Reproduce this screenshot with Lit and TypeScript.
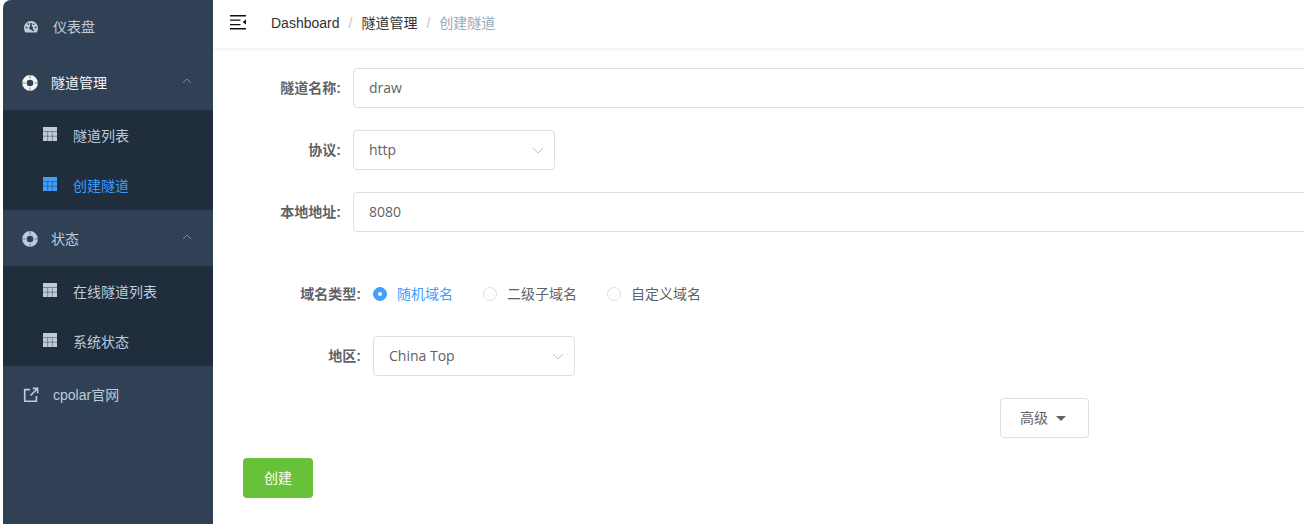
import { LitElement, html, css } from "lit";
import { customElement } from "lit/decorators.js";

const gauge = html`<svg class="ico" viewBox="0 0 16 16"><path fill="currentColor" fill-rule="evenodd" d="M8 2C3.900 2 1 5.300 1 9.200c0 1.500.4 2.800 1 3.900.2.3.5.5.8.5h10.400c.3 0 .6-.2.8-.5.6-1.100 1-2.400 1-3.900C15 5.300 12.100 2 8 2zM4.300 4.700l1.300-.8.8 1.400-1.300.8zM2.500 9l.3-1.500 1.600.4-.3 1.500zM8.800 4v3.200c.7.3 1.200.9 1.200 1.700 0 .4-.1.8-.4 1.100l1.900 2H9.300L8.300 10.800H8a1.900 1.900 0 0 1-.8-3.600V4zM11.700 8l1.600-.4.3 1.400-1.600.4zM10.500 6.200l-.9-.9 1.100-1 .9.9z"/></svg>`;
const buoy = html`<svg class="ico buoy" viewBox="0 0 16 16"><circle cx="8" cy="8" r="5.600" fill="none" stroke="currentColor" stroke-width="4.600"/><path d="M0 8h3.500M12.500 8h3.500M8 0v3.500M8 12.500v3.500" stroke="#304156" stroke-width="1" opacity=".6"/></svg>`;
const table = html`<svg class="ico tbl" viewBox="0 0 14 14"><path fill="currentColor" d="M0 0h14v14H0z"/><path d="M0 4.500h14M0 9.200h14M4.700 4.500V14M9.300 4.500V14" stroke="#1f2d3d" stroke-width=".8" opacity=".55" fill="none"/></svg>`;
const link = html`<svg class="ico" viewBox="0 0 16 16"><path fill="none" stroke="currentColor" stroke-width="1.600" d="M7 2.600H1.700v11.700h11.700V9M7.500 8.500 14 2M9.800 1.400h4.800v4.800"/></svg>`;
const chevUp = html`<svg class="chev" viewBox="0 0 12 12"><path d="M2 8 6 4l4 4" fill="none" stroke="currentColor" stroke-width="1"/></svg>`;
const chevDown = html`<svg class="sel-chev" viewBox="0 0 14 14"><path d="M1.800 4.800 7 10l5.200-5.200" fill="none" stroke="#c0c4cc" stroke-width="1"/></svg>`;

@customElement("app-root")
export class AppRoot extends LitElement {
  static styles = css`
    :host { display: block; width: 100%; height: 100vh; overflow: hidden; background: #fff;
      font-family: "Liberation Sans", "Noto Sans CJK SC", sans-serif; font-size: 14px; }
    * { box-sizing: border-box; }
    .app { display: flex; height: 524px; padding-left: 3px; }
    .side { width: 210px; flex: none; background: #304156; color: #bfcbd9; border-top-left-radius: 8px; overflow: hidden; }
    .menu { margin-top: -2px; }
    .item { height: 56px; display: flex; align-items: center; padding-left: 20px; }
    .item .ico { width: 16px; height: 16px; flex: none; margin-right: 14px; margin-top: 1px; }
    .item.sub-title { padding-left: 19px; }
    .item.sub-title .ico { margin-right: 13px; }
    .sub-title.open { color: #f4f4f5; }
    .chev { width: 12px; height: 12px; margin-left: auto; margin-right: 20px; margin-top: -2px; color: #7c8796; }
    .sub { background: #1f2d3d; }
    .sub .row { height: 50px; display: flex; align-items: center; padding-left: 40px; padding-bottom: 1px; }
    .ico.tbl { width: 14px; height: 14px; flex: none; margin-right: 16px; margin-top: -1px; }
    .sub .row.active { color: #409eff; }
    .main { flex: 1; min-width: 0; overflow: hidden; }
    .bar { height: 48px; display: flex; align-items: center; box-shadow: 0 1px 4px rgba(0,21,41,.08); position: relative; }
    .ham { width: 16px; height: 16px; margin-left: 17px; margin-top: -4px; flex: none; color: #111; }
    .crumbs { margin-left: 25px; display: flex; align-items: center; color: #303133; margin-top: -2px; }
    .cjk { padding-bottom: 2px; }
    .sep { color: #c0c4cc; margin: 0 9px; }
    .crumbs .last { color: #97a8be; }
    form { display: block; padding: 20px 0 0 30px; color: #606266; }
    .f { display: flex; align-items: center; height: 40px; margin-bottom: 22px; }
    .lbl { flex: none; text-align: right; padding: 0 12px 2px 0; font-weight: 700; width: 110px; }
    .wide .lbl { width: 130px; }
    .box { height: 40px; border: 1px solid #dcdfe6; border-radius: 4px; padding: 0 15px 2px; display: flex; align-items: center; background: #fff; color: #606266; font-family: "Open Sans", "Noto Sans CJK SC", sans-serif; }
    .input { width: 1200px; flex: none; }
    .select { width: 202px; flex: none; justify-content: space-between; padding-right: 9px; }
    .sel-chev { width: 14px; height: 14px; margin-top: 2px; }
    .f.gap { margin-top: 42px; }
    .radios { display: flex; align-items: center; }
    .radio { display: flex; align-items: center; margin-right: 30px; }
    .dot { width: 14px; height: 14px; border: 1px solid #dcdfe6; border-radius: 50%; margin-right: 10px; display: flex; align-items: center; justify-content: center; }
    .radio.on { color: #409eff; }
    .radio.on .dot { background: #409eff; border-color: #409eff; }
    .radio.on .dot::after { content: ""; width: 4px; height: 4px; border-radius: 50%; background: #fff; }
    .btn-adv { display: flex; align-items: center; margin-left: 757px; width: 89px; height: 40px; border: 1px solid #dcdfe6; border-radius: 4px; color: #606266; background: #fff; font: inherit; padding: 0 0 0 19px; }
    .caret { width: 0; height: 0; border-left: 5px solid transparent; border-right: 5px solid transparent; border-top: 5px solid #606266; margin-left: 8px; }
    .btn-ok { display: block; width: 70px; height: 40px; margin-top: -2px; border: 0; border-radius: 4px; background: #67c23a; color: #fff; font: inherit; padding: 0 0 2px; }
  `;

  render() {
    return html`<div class="app">
      <aside class="side"><nav class="menu">
        <div class="item">${gauge}<span>仪表盘</span></div>
        <div class="item sub-title open">${buoy}<span>隧道管理</span>${chevUp}</div>
        <div class="sub">
          <div class="row">${table}<span>隧道列表</span></div>
          <div class="row active">${table}<span>创建隧道</span></div>
        </div>
        <div class="item sub-title">${buoy}<span>状态</span>${chevUp}</div>
        <div class="sub">
          <div class="row">${table}<span>在线隧道列表</span></div>
          <div class="row">${table}<span>系统状态</span></div>
        </div>
        <div class="item">${link}<span>cpolar官网</span></div>
      </nav></aside>
      <main class="main">
        <header class="bar">
          <svg class="ham" viewBox="0 0 16 16"><path fill="currentColor" d="M0 1h16v1.400H0zM0 5.500h10.500v1.200H0zM0 10h10.500v1.200H0zM0 14h16v1.400H0zM16 5.500v5L12.600 8z"/></svg>
          <div class="crumbs"><span>Dashboard</span><span class="sep">/</span><span class="cjk">隧道管理</span><span class="sep">/</span><span class="cjk last">创建隧道</span></div>
        </header>
        <form>
          <div class="f"><label class="lbl">隧道名称:</label><div class="box input">draw</div></div>
          <div class="f"><label class="lbl">协议:</label><div class="box select"><span>http</span>${chevDown}</div></div>
          <div class="f"><label class="lbl">本地地址:</label><div class="box input">8080</div></div>
          <div class="f wide gap"><label class="lbl">域名类型:</label>
            <div class="radios">
              <div class="radio on"><span class="dot"></span><span class="cjk">随机域名</span></div>
              <div class="radio"><span class="dot"></span><span class="cjk">二级子域名</span></div>
              <div class="radio"><span class="dot"></span><span class="cjk">自定义域名</span></div>
            </div>
          </div>
          <div class="f wide"><label class="lbl">地区:</label><div class="box select"><span>China Top</span>${chevDown}</div></div>
          <div class="f"><button type="button" class="btn-adv"><span class="cjk">高级</span><span class="caret"></span></button></div>
          <button type="button" class="btn-ok">创建</button>
        </form>
      </main>
    </div>`;
  }
}
